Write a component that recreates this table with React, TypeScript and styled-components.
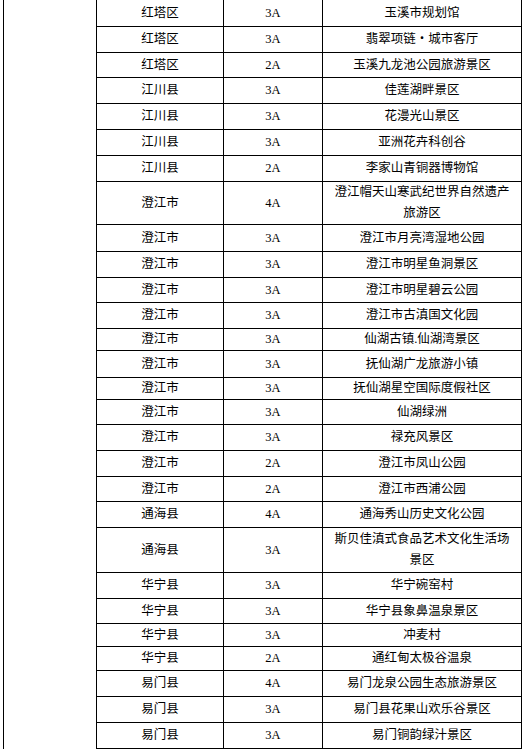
import React from 'react'
import styled, {createGlobalStyle} from 'styled-components'

const GlobalStyle = createGlobalStyle`
  html, body {
    margin: 0;
    padding: 0;
    background: #fff;
  }
  body {
    font-family: "Liberation Serif", "Noto Sans CJK SC", serif;
    color: #000;
  }
`

const Page = styled.div`
  padding: 0 3px;
  margin-top: -1px;
  overflow: hidden;
  height: 750px;
`

const Table = styled.table`
  border-collapse: collapse;
  table-layout: fixed;
  width: 518px;
`

const Col = styled.col<{$w: number}>`
  width: ${({$w}) => $w}px;
`

const Row = styled.tr<{$h: number}>`
  height: ${({$h}) => $h}px;
`

const Cell = styled.td<{$wide?: boolean}>`
  border: 1px solid #000;
  padding: 0 ${({$wide}) => ($wide ? 8 : 2)}px;
  text-align: center;
  vertical-align: middle;
  font-size: 12.5px;
  line-height: 21px;
  white-space: normal;
  word-break: break-all;
`

const CityCell = styled.td`
  border: 1px solid #000;
  padding: 0;
`

type Spot = [string, string, string, number]

const columns = [93, 127, 99, 199]

const spots: Spot[] = [
  ['红塔区', '3A', '玉溪市规划馆', 27],
  ['红塔区', '3A', '翡翠项链・城市客厅', 26],
  ['红塔区', '2A', '玉溪九龙池公园旅游景区', 25],
  ['江川县', '3A', '佳莲湖畔景区', 26],
  ['江川县', '3A', '花漫光山景区', 26],
  ['江川县', '3A', '亚洲花卉科创谷', 26],
  ['江川县', '2A', '李家山青铜器博物馆', 26],
  ['澄江市', '4A', '澄江帽天山寒武纪世界自然遗产旅游区', 43],
  ['澄江市', '3A', '澄江市月亮湾湿地公园', 27],
  ['澄江市', '3A', '澄江市明星鱼洞景区', 26],
  ['澄江市', '3A', '澄江市明星碧云公园', 25],
  ['澄江市', '3A', '澄江市古滇国文化园', 26],
  ['澄江市', '3A', '仙湖古镇.仙湖湾景区', 22],
  ['澄江市', '3A', '抚仙湖广龙旅游小镇', 27],
  ['澄江市', '3A', '抚仙湖星空国际度假社区', 22],
  ['澄江市', '3A', '仙湖绿洲', 25],
  ['澄江市', '3A', '禄充风景区', 26],
  ['澄江市', '2A', '澄江市凤山公园', 26],
  ['澄江市', '2A', '澄江市西浦公园', 25],
  ['通海县', '4A', '通海秀山历史文化公园', 26],
  ['通海县', '3A', '斯贝佳滇式食品艺术文化生活场景区', 45],
  ['华宁县', '3A', '华宁碗窑村', 26],
  ['华宁县', '3A', '华宁县象鼻温泉景区', 25],
  ['华宁县', '3A', '冲麦村', 23],
  ['华宁县', '2A', '通红甸太极谷温泉', 24],
  ['易门县', '4A', '易门龙泉公园生态旅游景区', 26],
  ['易门县', '3A', '易门县花果山欢乐谷景区', 26],
  ['易门县', '3A', '易门铜韵绿汁景区', 26],
  ['', '', '', 26],
]

export default function App() {
  return (
    <>
      <GlobalStyle />
      <Page>
        <Table>
          <colgroup>
            {columns.map((w, i) => (
              <Col key={i} $w={w} />
            ))}
          </colgroup>
          <tbody>
            {spots.map(([area, level, name, h], i) => (
              <Row key={i} $h={h}>
                {i === 0 && <CityCell rowSpan={spots.length} />}
                <Cell>{area}</Cell>
                <Cell>{level}</Cell>
                <Cell $wide>{name}</Cell>
              </Row>
            ))}
          </tbody>
        </Table>
      </Page>
    </>
  )
}
